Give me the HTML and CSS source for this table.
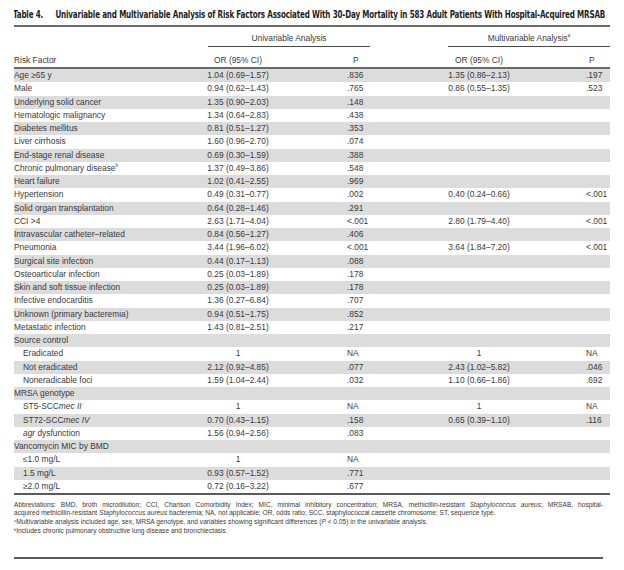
FILE: index.html
```html
<!DOCTYPE html>
<html lang="en">
<head>
<meta charset="utf-8">
<title>Table 4</title>
<link rel="stylesheet" href="styles.css">
</head>
<body>
<div class="page">
  <div class="title-wrap">
    <h1 class="title"><span class="tnum">Table 4.</span>Univariable and Multivariable Analysis of Risk Factors Associated With 30-Day Mortality in 583 Adult Patients With Hospital-Acquired MRSAB</h1>
  </div>

  <div class="group-head">
    <div class="group uni">Univariable Analysis</div>
    <div class="group multi">Multivariable Analysis<sup>a</sup></div>
  </div>

  <div class="row head">
    <div class="c1">Risk Factor</div>
    <div class="c2">OR (95% CI)</div>
    <div class="c3 hp1">P</div>
    <div class="c4">OR (95% CI)</div>
    <div class="c5 hp2">P</div>
  </div>

  <div class="body">
    <div class="row"><div class="c1">Age ≥65 y</div><div class="c2">1.04 (0.69–1.57)</div><div class="c3">.836</div><div class="c4">1.35 (0.86–2.13)</div><div class="c5">.197</div></div>
    <div class="row"><div class="c1">Male</div><div class="c2">0.94 (0.62–1.43)</div><div class="c3">.765</div><div class="c4">0.86 (0.55–1.35)</div><div class="c5">.523</div></div>
    <div class="row"><div class="c1">Underlying solid cancer</div><div class="c2">1.35 (0.90–2.03)</div><div class="c3">.148</div><div class="c4"></div><div class="c5"></div></div>
    <div class="row"><div class="c1">Hematologic malignancy</div><div class="c2">1.34 (0.64–2.83)</div><div class="c3">.438</div><div class="c4"></div><div class="c5"></div></div>
    <div class="row"><div class="c1">Diabetes mellitus</div><div class="c2">0.81 (0.51–1.27)</div><div class="c3">.353</div><div class="c4"></div><div class="c5"></div></div>
    <div class="row"><div class="c1">Liver cirrhosis</div><div class="c2">1.60 (0.96–2.70)</div><div class="c3">.074</div><div class="c4"></div><div class="c5"></div></div>
    <div class="row"><div class="c1">End-stage renal disease</div><div class="c2">0.69 (0.30–1.59)</div><div class="c3">.388</div><div class="c4"></div><div class="c5"></div></div>
    <div class="row"><div class="c1">Chronic pulmonary disease<sup>b</sup></div><div class="c2">1.37 (0.49–3.86)</div><div class="c3">.548</div><div class="c4"></div><div class="c5"></div></div>
    <div class="row"><div class="c1">Heart failure</div><div class="c2">1.02 (0.41–2.55)</div><div class="c3">.969</div><div class="c4"></div><div class="c5"></div></div>
    <div class="row"><div class="c1">Hypertension</div><div class="c2">0.49 (0.31–0.77)</div><div class="c3">.002</div><div class="c4">0.40 (0.24–0.66)</div><div class="c5">&lt;.001</div></div>
    <div class="row"><div class="c1">Solid organ transplantation</div><div class="c2">0.64 (0.28–1.46)</div><div class="c3">.291</div><div class="c4"></div><div class="c5"></div></div>
    <div class="row"><div class="c1">CCI &gt;4</div><div class="c2">2.63 (1.71–4.04)</div><div class="c3">&lt;.001</div><div class="c4">2.80 (1.79–4.40)</div><div class="c5">&lt;.001</div></div>
    <div class="row"><div class="c1">Intravascular catheter–related</div><div class="c2">0.84 (0.56–1.27)</div><div class="c3">.406</div><div class="c4"></div><div class="c5"></div></div>
    <div class="row"><div class="c1">Pneumonia</div><div class="c2">3.44 (1.96–6.02)</div><div class="c3">&lt;.001</div><div class="c4">3.64 (1.84–7.20)</div><div class="c5">&lt;.001</div></div>
    <div class="row"><div class="c1">Surgical site infection</div><div class="c2">0.44 (0.17–1.13)</div><div class="c3">.088</div><div class="c4"></div><div class="c5"></div></div>
    <div class="row"><div class="c1">Osteoarticular infection</div><div class="c2">0.25 (0.03–1.89)</div><div class="c3">.178</div><div class="c4"></div><div class="c5"></div></div>
    <div class="row"><div class="c1">Skin and soft tissue infection</div><div class="c2">0.25 (0.03–1.89)</div><div class="c3">.178</div><div class="c4"></div><div class="c5"></div></div>
    <div class="row"><div class="c1">Infective endocarditis</div><div class="c2">1.36 (0.27–6.84)</div><div class="c3">.707</div><div class="c4"></div><div class="c5"></div></div>
    <div class="row"><div class="c1">Unknown (primary bacteremia)</div><div class="c2">0.94 (0.51–1.75)</div><div class="c3">.852</div><div class="c4"></div><div class="c5"></div></div>
    <div class="row"><div class="c1">Metastatic infection</div><div class="c2">1.43 (0.81–2.51)</div><div class="c3">.217</div><div class="c4"></div><div class="c5"></div></div>
    <div class="row"><div class="c1">Source control</div><div class="c2"></div><div class="c3"></div><div class="c4"></div><div class="c5"></div></div>
    <div class="row"><div class="c1 sub">Eradicated</div><div class="c2">1</div><div class="c3">NA</div><div class="c4">1</div><div class="c5">NA</div></div>
    <div class="row"><div class="c1 sub">Not eradicated</div><div class="c2">2.12 (0.92–4.85)</div><div class="c3">.077</div><div class="c4">2.43 (1.02–5.82)</div><div class="c5">.046</div></div>
    <div class="row"><div class="c1 sub">Noneradicable foci</div><div class="c2">1.59 (1.04–2.44)</div><div class="c3">.032</div><div class="c4">1.10 (0.66–1.86)</div><div class="c5">.692</div></div>
    <div class="row"><div class="c1">MRSA genotype</div><div class="c2"></div><div class="c3"></div><div class="c4"></div><div class="c5"></div></div>
    <div class="row"><div class="c1 sub">ST5-SCC<i>mec II</i></div><div class="c2">1</div><div class="c3">NA</div><div class="c4">1</div><div class="c5">NA</div></div>
    <div class="row"><div class="c1 sub">ST72-SCC<i>mec IV</i></div><div class="c2">0.70 (0.43–1.15)</div><div class="c3">.158</div><div class="c4">0.65 (0.39–1.10)</div><div class="c5">.116</div></div>
    <div class="row"><div class="c1 sub"><i>agr</i> dysfunction</div><div class="c2">1.56 (0.94–2.56)</div><div class="c3">.083</div><div class="c4"></div><div class="c5"></div></div>
    <div class="row"><div class="c1">Vancomycin MIC by BMD</div><div class="c2"></div><div class="c3"></div><div class="c4"></div><div class="c5"></div></div>
    <div class="row"><div class="c1 sub">≤1.0 mg/L</div><div class="c2">1</div><div class="c3">NA</div><div class="c4"></div><div class="c5"></div></div>
    <div class="row"><div class="c1 sub">1.5 mg/L</div><div class="c2">0.93 (0.57–1.52)</div><div class="c3">.771</div><div class="c4"></div><div class="c5"></div></div>
    <div class="row"><div class="c1 sub">≥2.0 mg/L</div><div class="c2">0.72 (0.16–3.22)</div><div class="c3">.677</div><div class="c4"></div><div class="c5"></div></div>
  </div>

  <div class="notes">
    <p><span class="jline">Abbreviations: BMD, broth microdilution; CCI, Charlson Comorbidity Index; MIC, minimal inhibitory concentration; MRSA, methicillin-resistant <i>Staphylococcus aureus</i>; MRSAB, hospital-</span>acquired methicillin-resistant <i>Staphylococcus aureus</i> bacteremia; NA, not applicable; OR, odds ratio; SCC, staphylococcal cassette chromosome; ST, sequence type.</p>
    <p><sup>a</sup>Multivariable analysis included age, sex, MRSA genotype, and variables showing significant differences (<i>P</i> &lt; 0.05) in the univariable analysis.</p>
    <p><sup>b</sup>Includes chronic pulmonary obstructive lung disease and bronchiectasis.</p>
  </div>
</div>
</body>
</html>
```
FILE: styles.css
```css
html, body {
  margin: 0;
  padding: 0;
  background: #ffffff;
}

.page {
  width: 596px;
  padding: 0 14px;
  font-family: "Liberation Sans", Arial, sans-serif;
  color: #3a3a3a;
}

.title-wrap {
  padding-top: 4px;
  padding-bottom: 9px;
  border-bottom: 2px solid #6a6a6a;
  overflow: hidden;
  height: 12px;
}

.title {
  display: inline-block;
  margin: 0 0 0 -1px;
  font-family: "DejaVu Sans", sans-serif;
  font-stretch: condensed;
  font-weight: bold;
  font-size: 9.8px;
  line-height: 12px;
  color: #1e1e1e;
  white-space: nowrap;
  letter-spacing: -0.2px;
  transform: scaleX(0.815);
  transform-origin: 0 50%;
}

.tnum {
  display: inline-block;
  width: 52px;
}

.group-head {
  display: flex;
  font-size: 8.4px;
  line-height: 11px;
}

.group {
  width: 162px;
  padding: 6px 0 2px;
  text-align: center;
  border-bottom: 1px solid #4a4a4a;
}

.group.uni { margin-left: 194px; }
.group.multi { margin-left: 78px; }

.group sup, .c1 sup {
  font-size: 4.5px;
  vertical-align: 4px;
  line-height: 0;
}

.row {
  display: grid;
  grid-template-columns: 166px 116px 114px 138px 62px;
  font-size: 8.4px;
  height: 13.25px;
  line-height: 13.25px;
  white-space: nowrap;
}

.row.head {
  height: auto;
  line-height: 11px;
  padding: 7.5px 0 1.5px;
  border-bottom: 2px solid #6a6a6a;
}

.body .row:nth-child(odd) {
  background: #dcdcdc;
}

.body {
  border-bottom: 2px solid #5a5a5a;
}

.c2, .c4 { text-align: center; }
.c3 { padding-left: 51px; }
.c5 { padding-left: 38px; }
.c3.hp1 { padding-left: 57px; }
.c5.hp2 { padding-left: 41px; }
.sub { padding-left: 9px; }

.notes {
  font-size: 6.6px;
  line-height: 8px;
  padding-top: 6px;
  padding-bottom: 21px;
  border-bottom: 2px solid #5a5a5a;
  width: 589px;
}

.notes p {
  margin: 0 0 1px;
}

.jline {
  display: block;
  text-align: justify;
  text-align-last: justify;
}

.notes sup {
  font-size: 4px;
  vertical-align: 2.5px;
  line-height: 0;
}
```
